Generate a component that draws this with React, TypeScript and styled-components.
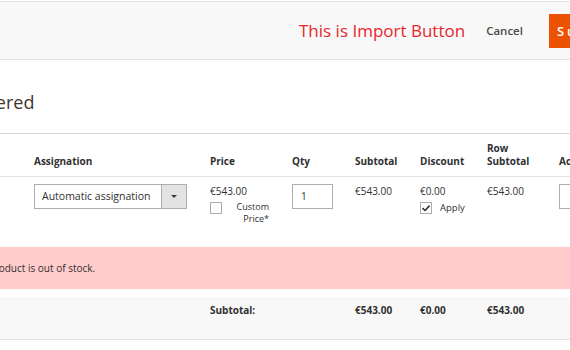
import styled, { createGlobalStyle } from 'styled-components'

const GlobalStyle = createGlobalStyle`
  body {
    margin: 0;
    font-family: "Open Sans", "DejaVu Sans", sans-serif;
    color: #303030;
    background: #fff;
  }
`

const cols = '116px 176px 82px 63px 65px 67px 72px 100px'

export default function App() {
  return (
    <Page>
      <GlobalStyle />
      <ActionBar>
        <ImportText>This is Import Button</ImportText>
        <CancelLink>Cancel</CancelLink>
        <SubmitButton>Submit Order</SubmitButton>
      </ActionBar>

      <Section>
        <SectionTitle>Items Ordered</SectionTitle>

        <HeadRow>
          <Cell />
          <HeadCell>Assignation</HeadCell>
          <HeadCell>Price</HeadCell>
          <HeadCell>Qty</HeadCell>
          <HeadCell>Subtotal</HeadCell>
          <HeadCell>Discount</HeadCell>
          <HeadCell>Row<br />Subtotal</HeadCell>
          <HeadCell>Action</HeadCell>
        </HeadRow>

        <ItemRow>
          <Cell />
          <Cell>
            <Select>
              <SelectText>Automatic assignation</SelectText>
              <SelectArrow><span /></SelectArrow>
            </Select>
          </Cell>
          <Cell>
            <Amount>€543.00</Amount>
            <CheckLine>
              <Checkbox />
              <CustomLabel>Custom<br />Price*</CustomLabel>
            </CheckLine>
          </Cell>
          <Cell>
            <QtyInput>1</QtyInput>
          </Cell>
          <Cell><Amount>€543.00</Amount></Cell>
          <Cell>
            <Amount>€0.00</Amount>
            <CheckLine>
              <Checkbox>
                <svg width="10" height="10" viewBox="0 0 10 10">
                  <path d="M1.5 5.2 L4 7.5 L8.6 2.6" fill="none" stroke="#303030" strokeWidth="1.6" />
                </svg>
              </Checkbox>
              <ApplyLabel>Apply</ApplyLabel>
            </CheckLine>
          </Cell>
          <Cell><Amount>€543.00</Amount></Cell>
          <Cell>
            <ActionSelect />
          </Cell>
        </ItemRow>

        <ErrorRow>This product is out of stock.</ErrorRow>

        <TotalRow>
          <Cell />
          <Cell />
          <TotalCell>Subtotal:</TotalCell>
          <Cell />
          <TotalCell>€543.00</TotalCell>
          <TotalCell>€0.00</TotalCell>
          <TotalCell>€543.00</TotalCell>
          <Cell />
        </TotalRow>
      </Section>
    </Page>
  )
}

const Page = styled.div`
  width: 570px;
  height: 350px;
  overflow: hidden;
  position: relative;
`

const ActionBar = styled.div`
  margin-top: 1px;
  height: 57px;
  border-top: 1px solid #e3e3e3;
  border-bottom: 1px solid #e3e3e3;
  background: #f8f8f8;
  display: flex;
  align-items: center;
  padding-left: 299px;
  white-space: nowrap;
`

const ImportText = styled.span`
  color: #e8262b;
  font-size: 17px;
  margin-right: 21px;
`

const CancelLink = styled.span`
  color: #514943;
  font-size: 11.5px;
  font-weight: 600;
  margin-right: 26px;
`

const SubmitButton = styled.span`
  flex: none;
  background: #eb5202;
  color: #fff;
  height: 34px;
  padding: 0 8px;
  display: flex;
  align-items: center;
  font-size: 13px;
  font-weight: 600;
  letter-spacing: 3px;
`

const Section = styled.div`
  margin-left: -82px;
  width: 760px;
`

const SectionTitle = styled.h2`
  margin: 31px 0 20px -6px;
  font-size: 18px;
  font-weight: 400;
  line-height: 22px;
  color: #41362f;
`

const Row = styled.div`
  display: grid;
  grid-template-columns: ${cols};
  font-size: 10px;
  line-height: 13px;
`

const HeadRow = styled(Row)`
  border-top: 1px solid #d6d6d6;
  border-bottom: 1px solid #e3e3e3;
  align-items: end;
  padding-bottom: 8px;
  box-sizing: border-box;
  height: 44px;
`

const Cell = styled.div`
  min-width: 0;
`

const HeadCell = styled.div`
  font-weight: 700;
  color: #303030;
`

const ItemRow = styled(Row)`
  height: 70px;
  padding-top: 7px;
  box-sizing: border-box;
  align-items: start;
`

const Select = styled.div`
  width: 153px;
  height: 25px;
  box-sizing: border-box;
  border: 1px solid #adadad;
  display: flex;
  background: #fff;
`

const SelectText = styled.div`
  flex: 1;
  padding-left: 7px;
  font-size: 10.5px;
  line-height: 23px;
  color: #303030;
  white-space: nowrap;
`

const SelectArrow = styled.div`
  width: 24px;
  border-left: 1px solid #adadad;
  background: #e3e3e3;
  display: flex;
  align-items: center;
  justify-content: center;

  span {
    width: 0;
    height: 0;
    border-left: 3px solid transparent;
    border-right: 3px solid transparent;
    border-top: 3px solid #41362f;
  }
`

const Amount = styled.div`
  margin-top: 1px;
  white-space: nowrap;
`

const CheckLine = styled.div`
  display: flex;
  align-items: flex-start;
  margin-top: 4px;
`

const Checkbox = styled.div`
  width: 12px;
  height: 12px;
  box-sizing: border-box;
  border: 1px solid #adadad;
  background: #fff;
  display: flex;
  align-items: center;
  justify-content: center;
  flex: none;
`

const CustomLabel = styled.div`
  width: 47px;
  text-align: right;
  font-size: 9px;
  line-height: 12px;
  margin-top: -1px;
`

const ApplyLabel = styled.div`
  margin-left: 8px;
  font-size: 9.5px;
  line-height: 12px;
`

const QtyInput = styled.div`
  width: 41px;
  height: 25px;
  box-sizing: border-box;
  border: 1px solid #adadad;
  padding-left: 8px;
  line-height: 23px;
  font-size: 10px;
`

const ActionSelect = styled.div`
  width: 100px;
  height: 25px;
  box-sizing: border-box;
  border: 1px solid #adadad;
  background: #fff;
`

const ErrorRow = styled.div`
  background: #ffcbcb;
  height: 42px;
  display: flex;
  align-items: center;
  padding-left: 49px;
  font-size: 10px;
  color: #303030;
`

const TotalRow = styled(Row)`
  margin-top: 8px;
  height: 43px;
  box-sizing: border-box;
  background: #f8f8f8;
  border-bottom: 1px solid #e3e3e3;
  padding-top: 7px;
`

const TotalCell = styled.div`
  font-weight: 700;
  white-space: nowrap;
`
